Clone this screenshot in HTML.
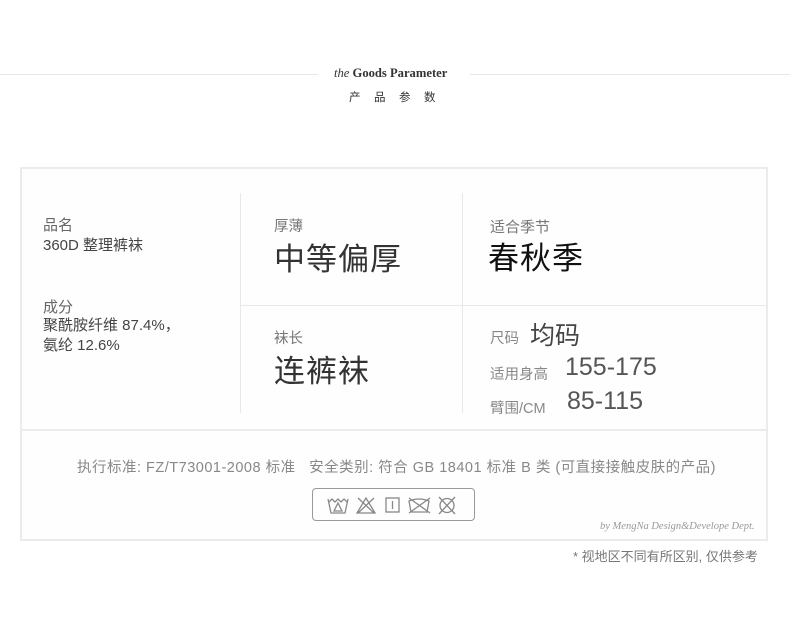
<!DOCTYPE html>
<html><head><meta charset="utf-8">
<style>
*{margin:0;padding:0;box-sizing:border-box}
body{width:790px;height:621px;background:#fff;position:relative;overflow:hidden;font-family:"Liberation Sans","Noto Sans CJK SC",sans-serif;color:#444}
.a{position:absolute;white-space:nowrap}
.lbl{font-size:15px;color:#777}
.big{font-size:31px;color:#333;letter-spacing:1px}
</style></head><body>
<div class="a" style="left:0;top:74px;width:318px;height:1px;background:#e6e6e6"></div>
<div class="a" style="left:470px;top:74px;width:320px;height:1px;background:#e6e6e6"></div>
<div class="a" style="left:334px;top:66px;font-family:'Liberation Serif',serif;font-size:12.6px;font-weight:bold;color:#333"><i style="font-weight:normal">the</i> Goods Parameter</div>
<div class="a" style="left:349px;top:89px;font-size:11.5px;color:#333;letter-spacing:13.5px">产品参数</div>

<div class="a" style="left:20px;top:167px;width:748px;height:374px;border:2px solid #ebebeb;background:#fefefe"></div>
<div class="a" style="left:22px;top:429px;width:744px;height:2px;background:#ebebeb"></div>
<div class="a" style="left:240px;top:193px;width:1px;height:220px;background:#e8e8e8"></div>
<div class="a" style="left:462px;top:193px;width:1px;height:220px;background:#e8e8e8"></div>
<div class="a" style="left:240px;top:305px;width:526px;height:1px;background:#e8e8e8"></div>

<div class="a lbl" style="left:43px;top:214px;color:#666">品名</div>
<div class="a" style="left:43px;top:234px;font-size:15px;color:#444">360D 整理裤袜</div>
<div class="a lbl" style="left:43px;top:296px;color:#666">成分</div>
<div class="a" style="left:43px;top:316px;font-size:15px;color:#444;line-height:20px">聚酰胺纤维 87.4%，<br>氨纶 12.6%</div>

<div class="a lbl" style="left:274px;top:215px;font-size:14.5px">厚薄</div>
<div class="a big" style="left:274px;top:234px">中等偏厚</div>
<div class="a lbl" style="left:274px;top:327px;font-size:14.5px">袜长</div>
<div class="a big" style="left:274px;top:346px">连裤袜</div>

<div class="a lbl" style="left:490px;top:216px;font-size:15px">适合季节</div>
<div class="a big" style="left:488px;top:233px;color:#111">春秋季</div>
<div class="a lbl" style="left:490px;top:327px;font-size:14.5px;color:#888">尺码</div>
<div class="a" style="left:530px;top:316px;font-size:25px;color:#444">均码</div>
<div class="a lbl" style="left:490px;top:363px;font-size:14.5px;color:#888">适用身高</div>
<div class="a" style="left:565px;top:353px;font-size:25px;color:#555">155-175</div>
<div class="a lbl" style="left:490px;top:397px;font-size:14.5px;color:#888">臂围/CM</div>
<div class="a" style="left:567px;top:387px;font-size:25px;color:#555">85-115</div>

<div class="a" style="left:77px;top:456px;font-size:14.5px;letter-spacing:0.5px;color:#888">执行标准: FZ/T73001-2008 标准&nbsp;&nbsp;&nbsp;安全类别: 符合 GB 18401 标准 B 类 (可直接接触皮肤的产品)</div>

<div class="a" style="left:312px;top:488px;width:163px;height:33px;border:1.5px solid #999;border-radius:4px"></div>
<svg class="a" style="left:312px;top:488px" width="163" height="33" viewBox="0 0 163 33" fill="none" stroke="#888" stroke-width="1.3">
<path d="M16 11 L19 25 H33 L36 11 M17 14 L20 11 L23 14 L26 11 L29 14 L32 11 L35 14 M22 23 L26 15 L30 23 Z"/>
<path d="M45 25 L54 10 L63 25 Z M46 10 L62 25 M62 10 L46 25"/>
<rect x="74" y="10" width="13" height="14"/><path d="M80.5 13 V21"/>
<path d="M97 13 Q107 9 117 13 L115 24 H99 Z M97 10 L118 25 M118 10 L97 25"/>
<circle cx="135" cy="17.5" r="7"/><path d="M127 9 L143 26 M143 9 L127 26"/>
</svg>
<div class="a" style="left:600px;top:521px;font-family:'Liberation Serif',serif;font-style:italic;font-size:10.5px;color:#999">by MengNa Design&amp;Develope Dept.</div>
<div class="a" style="left:573px;top:546px;font-size:13px;color:#777">* 视地区不同有所区别, 仅供参考</div>
</body></html>
